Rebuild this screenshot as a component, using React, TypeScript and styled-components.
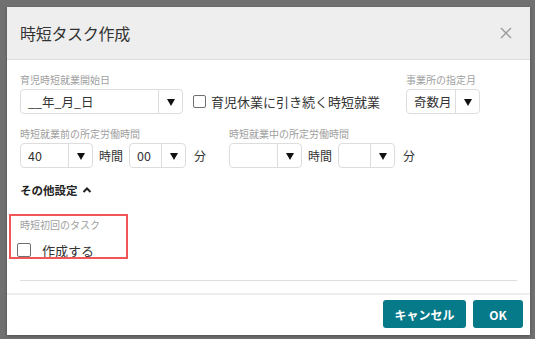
import React from "react";
import styled, { createGlobalStyle } from "styled-components";

const GlobalStyle = createGlobalStyle`
  html, body { margin: 0; padding: 0; }
  body {
    font-family: "Noto Sans CJK JP", "Noto Sans", "Liberation Sans", sans-serif;
    background: #707070;
    color: #333;
  }
  * { box-sizing: border-box; }
`;

const Backdrop = styled.div`
  width: 535px;
  height: 339px;
  padding: 7px 5px 4px 7px;
  background: #707070;
`;

const Modal = styled.div`
  width: 100%;
  height: 100%;
  background: #fff;
  display: flex;
  flex-direction: column;
  box-shadow: 0 1px 3px rgba(0, 0, 0, 0.3);
`;

const Header = styled.div`
  height: 53px;
  flex: none;
  background: #eeeeee;
  border-bottom: 1px solid #dcdcdc;
  display: flex;
  align-items: center;
  justify-content: space-between;
  padding: 0 18px 0 13px;
`;

const Title = styled.h1`
  margin: 0;
  font-size: 16px;
  font-weight: 400;
  color: #333;
  letter-spacing: -0.3px;
`;

const CloseButton = styled.button`
  border: 0;
  background: none;
  padding: 0;
  width: 12px;
  height: 12px;
  display: flex;
  cursor: pointer;
`;

const Body = styled.div`
  flex: 1;
  padding: 13px 13px 0 13px;
  display: flex;
  flex-direction: column;
`;

const Row = styled.div`
  display: flex;
  align-items: flex-end;
`;

const Grid = styled.div`
  display: grid;
  grid-template-columns: 209px auto;
  margin-top: 13px;
`;

const Field = styled.div<{ $ml?: number }>`
  display: flex;
  flex-direction: column;
  margin-left: ${(p) => p.$ml ?? 0}px;
`;

const Label = styled.div`
  font-size: 10px;
  line-height: 14px;
  color: #a0a0a0;
  margin-bottom: 2px;
  white-space: nowrap;
`;

const SelectBox = styled.div<{ $w: number }>`
  width: ${(p) => p.$w}px;
  height: 25px;
  border: 1px solid #dddddd;
  border-radius: 4px;
  display: flex;
  background: #fff;
`;

const SelectValue = styled.div`
  flex: 1;
  display: flex;
  align-items: center;
  padding-left: 7px;
  font-size: 12.5px;
  color: #333;
  white-space: nowrap;
`;

const SelectArrow = styled.div`
  width: 24px;
  border-left: 1px solid #dddddd;
  display: flex;
  align-items: center;
  justify-content: center;
`;

const Unit = styled.span<{ $ml?: number }>`
  font-size: 12px;
  color: #333;
  margin: 0 6px 0 ${(p) => p.$ml ?? 6}px;
  line-height: 25px;
`;

const Inline = styled.div`
  display: flex;
  align-items: center;
`;

const CheckRow = styled.label<{ $ml?: number }>`
  display: flex;
  align-items: center;
  height: 25px;
  margin-left: ${(p) => p.$ml ?? 0}px;
  font-size: 13px;
  color: #333;
  white-space: nowrap;
`;

const Box = styled.span<{ $size: number; $mr?: number }>`
  width: ${(p) => p.$size}px;
  height: ${(p) => p.$size}px;
  border: 1.5px solid #707070;
  border-radius: 2px;
  margin-right: ${(p) => p.$mr ?? 5}px;
  flex: none;
`;

const Toggle = styled.div`
  margin-top: 14px;
  font-size: 11.5px;
  font-weight: 700;
  line-height: 16px;
  color: #222;
  display: flex;
  align-items: center;
  gap: 4px;
`;

const Section = styled.div`
  position: relative;
  margin-top: 20px;
`;

const Highlight = styled.div`
  position: absolute;
  left: -11px;
  top: -4px;
  width: 119px;
  height: 45px;
  border: 2px solid #f25757;
  pointer-events: none;
`;

const TaskRow = styled.div`
  display: flex;
  align-items: center;
  height: 20px;
  margin-top: 8px;
  margin-left: -3px;
  font-size: 13px;
  color: #333;
`;

const Divider = styled.div`
  height: 1px;
  background: #dedede;
  margin-top: auto;
  margin-bottom: 12px;
`;

const Footer = styled.div`
  height: 42px;
  flex: none;
  border-top: 2px solid #eeeeee;
  display: flex;
  align-items: center;
  justify-content: flex-end;
  gap: 7px;
  padding: 0 7px 2px 0;
`;

const Button = styled.button<{ $w: number }>`
  width: ${(p) => p.$w}px;
  height: 28px;
  border: 0;
  border-radius: 3px;
  background: #077a8a;
  color: #fff;
  font-family: inherit;
  font-size: 12px;
  font-weight: 700;
  cursor: pointer;
`;

const Arrow = () => (
  <svg width="8" height="8" viewBox="0 0 8 8">
    <polygon points="0,1 8,1 4,8" fill="#111" />
  </svg>
);

const Select = ({ w, value }: { w: number; value?: string }) => (
  <SelectBox $w={w}>
    <SelectValue>{value}</SelectValue>
    <SelectArrow>
      <Arrow />
    </SelectArrow>
  </SelectBox>
);

const HourMin = ({ h, m }: { h?: string; m?: string }) => (
  <Inline>
    <Select w={73} value={h} />
    <Unit>時間</Unit>
    <Select w={57} value={m} />
    <Unit $ml={8}>分</Unit>
  </Inline>
);

export default function App() {
  return (
    <>
      <GlobalStyle />
      <Backdrop>
        <Modal>
          <Header>
            <Title>時短タスク作成</Title>
            <CloseButton aria-label="close">
              <svg width="12" height="12" viewBox="0 0 12 12">
                <path d="M1 1L11 11M11 1L1 11" stroke="#9a9a9a" strokeWidth="1.4" fill="none" />
              </svg>
            </CloseButton>
          </Header>
          <Body>
            <Row>
              <Field>
                <Label>育児時短就業開始日</Label>
                <Select w={163} value="__年_月_日" />
              </Field>
              <CheckRow $ml={10}>
                <Box $size={13} />
                育児休業に引き続く時短就業
              </CheckRow>
              <Field $ml={26}>
                <Label>事業所の指定月</Label>
                <Select w={74} value="奇数月" />
              </Field>
            </Row>
            <Grid>
              <Field>
                <Label>時短就業前の所定労働時間</Label>
                <HourMin h="40" m="00" />
              </Field>
              <Field>
                <Label>時短就業中の所定労働時間</Label>
                <HourMin />
              </Field>
            </Grid>
            <Toggle>
              その他設定
              <svg width="10" height="8" viewBox="0 0 10 8">
                <path d="M1.5 6L5 2.5L8.5 6" stroke="#222" strokeWidth="2" fill="none" />
              </svg>
            </Toggle>
            <Section>
              <Label>時短初回のタスク</Label>
              <TaskRow>
                <Box $size={14} $mr={11} />
                作成する
              </TaskRow>
              <Highlight />
            </Section>
            <Divider />
          </Body>
          <Footer>
            <Button $w={83}>キャンセル</Button>
            <Button $w={50}>OK</Button>
          </Footer>
        </Modal>
      </Backdrop>
    </>
  );
}
